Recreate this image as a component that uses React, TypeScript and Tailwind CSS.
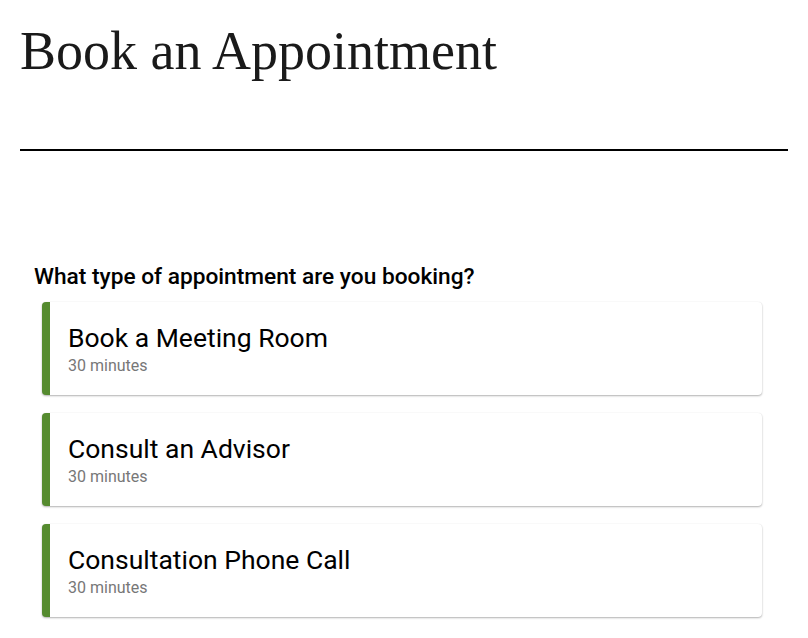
import React from "react";

const appointmentTypes = [
  { name: "Book a Meeting Room", duration: "30 minutes" },
  { name: "Consult an Advisor", duration: "30 minutes" },
  { name: "Consultation Phone Call", duration: "30 minutes" },
];

export default function App() {
  return (
    <div className="min-h-screen bg-white px-5 font-['Roboto',sans-serif]">
      <div className="border-b-2 border-black pb-[63px] pt-[16px]">
        <h1 className="font-['Liberation_Serif',serif] text-[54px] leading-[70px] font-normal text-[#1a1a1a]">
          Book an Appointment
        </h1>
      </div>

      <div className="pt-[111px] pl-[14px]">
        <h2 className="text-[22.7px] font-medium leading-[30px] text-black">
          What type of appointment are you booking?
        </h2>

        <div className="mt-[10px] flex flex-col gap-[18px] pl-2 pr-[26px]">
          {appointmentTypes.map((type) => (
            <button
              key={type.name}
              className="flex h-[93px] flex-col justify-center rounded border-l-8 border-[#558b2f] bg-white pl-[18px] text-left shadow-[0_1px_2px_rgba(0,0,0,0.3),0_0_1px_rgba(0,0,0,0.08)]"
            >
              <div className="text-[26.5px] leading-[32px] text-black">
                {type.name}
              </div>
              <div className="mt-[2px] text-[16px] leading-[20px] text-[#777]">
                {type.duration}
              </div>
            </button>
          ))}
        </div>
      </div>
    </div>
  );
}
